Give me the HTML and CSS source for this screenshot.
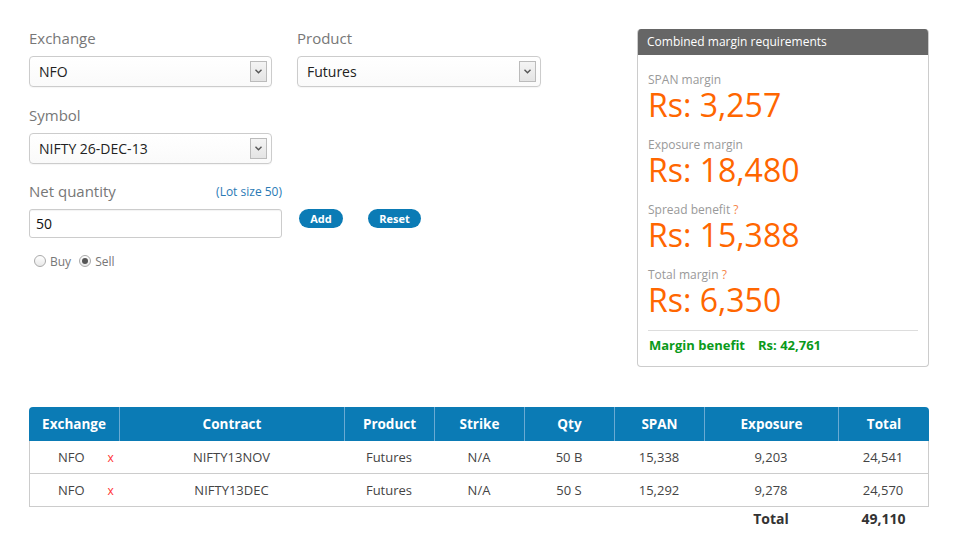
FILE: index.html
```html
<!DOCTYPE html>
<html>
<head>
<meta charset="utf-8">
<link rel="stylesheet" href="styles.css">
</head>
<body>
<div class="page">
  <div class="top">
    <div class="form">
      <div class="row">
        <div class="field">
          <div class="label">Exchange</div>
          <div class="select w243"><span class="sel-text">NFO</span><span class="arrow"><svg width="7" height="5" viewBox="0 0 7 5"><path d="M0.5 0.8 L3.5 3.8 L6.5 0.8" fill="none" stroke="#555" stroke-width="1.4"/></svg></span></div>
        </div>
        <div class="field">
          <div class="label">Product</div>
          <div class="select w244"><span class="sel-text">Futures</span><span class="arrow"><svg width="7" height="5" viewBox="0 0 7 5"><path d="M0.5 0.8 L3.5 3.8 L6.5 0.8" fill="none" stroke="#555" stroke-width="1.4"/></svg></span></div>
        </div>
      </div>
      <div class="row gap-top">
        <div class="field">
          <div class="label">Symbol</div>
          <div class="select w243"><span class="sel-text">NIFTY 26-DEC-13</span><span class="arrow"><svg width="7" height="5" viewBox="0 0 7 5"><path d="M0.5 0.8 L3.5 3.8 L6.5 0.8" fill="none" stroke="#555" stroke-width="1.4"/></svg></span></div>
        </div>
      </div>
      <div class="qty-head">
        <span class="label nomb">Net quantity</span>
        <span class="lot">(Lot size 50)</span>
      </div>
      <div class="qty-row">
        <div class="input">50</div>
        <span class="btn btn-add">Add</span>
        <span class="btn btn-reset">Reset</span>
      </div>
      <div class="radios">
        <span class="radio"></span><span class="radio-label">Buy</span>
        <span class="radio checked"></span><span class="radio-label">Sell</span>
      </div>
    </div>
    <div class="panel">
      <div class="panel-head">Combined margin requirements</div>
      <div class="panel-body">
        <div class="m-label">SPAN margin</div>
        <div class="m-value">Rs: 3,257</div>
        <div class="m-label">Exposure margin</div>
        <div class="m-value">Rs: 18,480</div>
        <div class="m-label">Spread benefit <span class="q">?</span></div>
        <div class="m-value">Rs: 15,388</div>
        <div class="m-label">Total margin <span class="q">?</span></div>
        <div class="m-value last">Rs: 6,350</div>
        <div class="benefit"><span>Margin benefit</span><span>Rs: 42,761</span></div>
      </div>
    </div>
  </div>

  <table class="grid">
    <colgroup>
      <col style="width:90px"><col style="width:225px"><col style="width:90px"><col style="width:90px"><col style="width:90px"><col style="width:90px"><col style="width:134px"><col style="width:91px">
    </colgroup>
    <thead>
      <tr><th>Exchange</th><th>Contract</th><th>Product</th><th>Strike</th><th>Qty</th><th>SPAN</th><th>Exposure</th><th>Total</th></tr>
    </thead>
    <tbody>
      <tr><td class="exch"><span>NFO</span><span class="del">x</span></td><td>NIFTY13NOV</td><td>Futures</td><td>N/A</td><td>50 B</td><td>15,338</td><td>9,203</td><td>24,541</td></tr>
      <tr><td class="exch"><span>NFO</span><span class="del">x</span></td><td>NIFTY13DEC</td><td>Futures</td><td>N/A</td><td>50 S</td><td>15,292</td><td>9,278</td><td>24,570</td></tr>
      <tr class="total"><td></td><td></td><td></td><td></td><td></td><td></td><td>Total</td><td>49,110</td></tr>
    </tbody>
  </table>
</div>
</body>
</html>
```

FILE: styles.css
```css
* { box-sizing: border-box; }
html, body { margin: 0; padding: 0; background: #fff; }
body { font-family: "Open Sans", "Noto Sans", sans-serif; color: #333; }
.page { padding: 29px 0 0 29px; width: 958px; }
.top { display: flex; justify-content: space-between; width: 900px; }
.form { margin-top: -1px; width: 520px; }
.row { display: flex; gap: 25px; }
.gap-top { margin-top: 18px; }
.label { font-size: 15px; line-height: 20px; color: #777; margin-bottom: 8px; }
.label.nomb { margin-bottom: 0; }
.select {
  height: 31px; border: 1px solid #ccc; border-radius: 4px;
  background: linear-gradient(#fff, #fafafa);
  box-shadow: 0 1px 1px rgba(0,0,0,0.04);
  display: flex; align-items: center; padding: 0 4px 0 9px;
}
.w243 { width: 243px; }
.w244 { width: 244px; }
.sel-text { flex: 1; font-size: 14px; color: #222; }
.arrow {
  width: 17px; height: 21px; border: 1px solid #bbb;
  background: linear-gradient(#f4f4f4, #e4e4e4);
  display: flex; align-items: center; justify-content: center;
}
.qty-head { display: flex; justify-content: space-between; align-items: center; width: 253px; margin-top: 17px; }
.lot { font-size: 12px; color: #2a7ab5; }
.qty-row { display: flex; align-items: flex-start; margin-top: 8px; }
.input {
  width: 253px; height: 29px; border: 1px solid #ccc; border-radius: 3px;
  font-size: 14px; color: #111; padding: 0 6px; line-height: 27px;
  box-shadow: inset 0 1px 1px rgba(0,0,0,0.05);
}
.btn {
  height: 19px; border-radius: 10px; background: #0b7bb5; color: #fff;
  font-size: 11px; font-weight: bold; display: flex; align-items: center; justify-content: center;
}
.btn-add { width: 44px; margin-left: 17px; }
.btn-reset { width: 53px; margin-left: 25px; }
.radios { display: flex; align-items: center; margin-top: 15px; padding-left: 5px; height: 16px; }
.radio {
  width: 12px; height: 12px; border-radius: 50%; border: 1px solid #aaa;
  background: linear-gradient(#fff, #e8e8e8); display: inline-flex; align-items: center; justify-content: center;
}
.radio.checked::after { content: ""; width: 6px; height: 6px; border-radius: 50%; background: #555; }
.radio-label { font-size: 12px; color: #777; margin-left: 4px; margin-right: 8px; }

.panel { width: 292px; height: 338px; border: 1px solid #ccc; border-top: 0; border-radius: 4px; overflow: hidden; }
.panel-head { background: #666; color: #fff; font-size: 12px; height: 26px; line-height: 26px; padding-left: 10px; margin: 0 -1px; }
.panel-body { padding: 17px 10px 0 10px; }
.m-label { font-size: 12px; line-height: 15px; color: #999; }
.q { color: #f6864a; }
.m-value { font-size: 32px; line-height: 36px; color: #f60; margin-bottom: 14px; }
.m-value.last { margin-bottom: 0; }
.benefit { border-top: 1px solid #ddd; margin-top: 12px; padding-top: 6px; display: flex; gap: 13px; font-size: 13px; font-weight: bold; color: #0a9a1a; line-height: 17px; padding-left: 1px; }

.grid { margin-top: 40px; border-collapse: separate; border-spacing: 0; width: 900px; table-layout: fixed; }
.grid th {
  background: #0b7bb5; color: #fff; font-size: 13.5px; font-weight: bold; height: 34px;
  text-align: center; border-left: 1px solid #6aaad3; padding: 0;
}
.grid th:first-child { border-left: 0; border-top-left-radius: 4px; }
.grid th:last-child { border-top-right-radius: 4px; }
.grid td { font-size: 13px; color: #444; text-align: center; height: 33px; border-bottom: 1px solid #ccc; padding: 0; }
.grid td:first-child { border-left: 1px solid #ccc; }
.grid td:last-child { border-right: 1px solid #ccc; }
.grid td.exch { text-align: left; padding-left: 28px; }
.del { color: #f33; font-size: 12px; margin-left: 23px; }
.grid tr.total td { border: 0; height: 22px; font-size: 14px; font-weight: bold; color: #333; }
```
